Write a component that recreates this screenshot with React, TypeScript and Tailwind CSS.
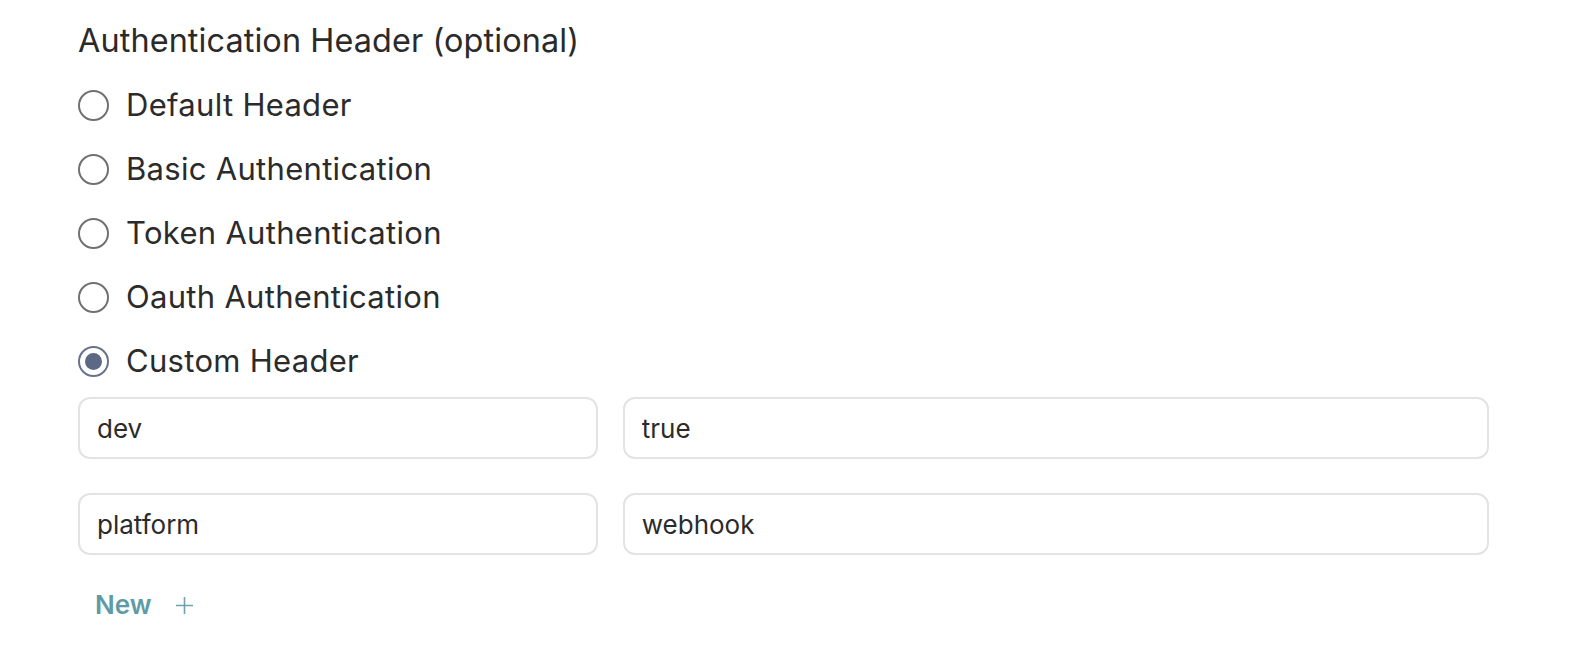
import { useState } from 'react';

type HeaderRow = {
  key: string;
  value: string;
};

const authOptions = [
  'Default Header',
  'Basic Authentication',
  'Token Authentication',
  'Oauth Authentication',
  'Custom Header',
];

export default function App() {
  const [selected, setSelected] = useState('Custom Header');
  const [rows, setRows] = useState<HeaderRow[]>([
    { key: 'dev', value: 'true' },
    { key: 'platform', value: 'webhook' },
  ]);

  // 行の値を更新
  const updateRow = (index: number, field: keyof HeaderRow, value: string) => {
    setRows(rows.map((row, i) => (i === index ? { ...row, [field]: value } : row)));
  };

  return (
    <div className="min-h-[648px] w-full bg-white font-['Inter','Liberation_Sans',sans-serif] text-[#2b2b2b]">
      <div className="ml-[78px] w-[1411px] pt-[21px]">
        <h2 className="text-[32.4px] leading-[40px] font-normal tracking-[0.1px] text-[#2a2a2a]">
          Authentication Header (optional)
        </h2>

        <div className="mt-[12px] flex flex-col">
          {authOptions.map((option) => {
            const active = selected === option;
            return (
              <label
                key={option}
                onClick={() => setSelected(option)}
                className="flex h-[64px] cursor-pointer items-center gap-[17px]"
              >
                <span
                  className={
                    active
                      ? 'flex h-[31px] w-[31px] items-center justify-center rounded-full border-2 border-[#67728c]'
                      : 'flex h-[31px] w-[31px] items-center justify-center rounded-full border-2 border-[#707070]'
                  }
                >
                  {active && <span className="h-[17px] w-[17px] rounded-full bg-[#5c6884]" />}
                </span>
                <span className="text-[31px] leading-[40px] tracking-[0.3px] text-[#2b2b2b]">{option}</span>
              </label>
            );
          })}
        </div>

        {selected === 'Custom Header' && (
          <div className="mt-[4px] flex flex-col gap-[34px]">
            {rows.map((row, i) => (
              <div key={i} className="grid grid-cols-[3fr_5fr] gap-[25px]">
                <input
                  type="text"
                  value={row.key}
                  onChange={(e) => updateRow(i, 'key', e.target.value)}
                  className="h-[62px] rounded-[12px] border-2 border-[#e3e3e3] px-[17px] text-[26px] text-[#2b2b2b] outline-none"
                />
                <input
                  type="text"
                  value={row.value}
                  onChange={(e) => updateRow(i, 'value', e.target.value)}
                  className="h-[62px] rounded-[12px] border-2 border-[#e3e3e3] px-[17px] text-[26px] text-[#2b2b2b] outline-none"
                />
              </div>
            ))}

            <button
              onClick={() => setRows([...rows, { key: '', value: '' }])}
              className="-mt-[2px] flex items-center gap-[24px] self-start pl-[17px] text-[26px] font-semibold leading-[36px] text-[#5f9ba6]"
            >
              New
              <svg width="17" height="17" viewBox="0 0 17 17" fill="none" stroke="#6ea3ad" strokeWidth="1.6">
                <path d="M8.5 0v17M0 8.5h17" />
              </svg>
            </button>
          </div>
        )}
      </div>
    </div>
  );
}
